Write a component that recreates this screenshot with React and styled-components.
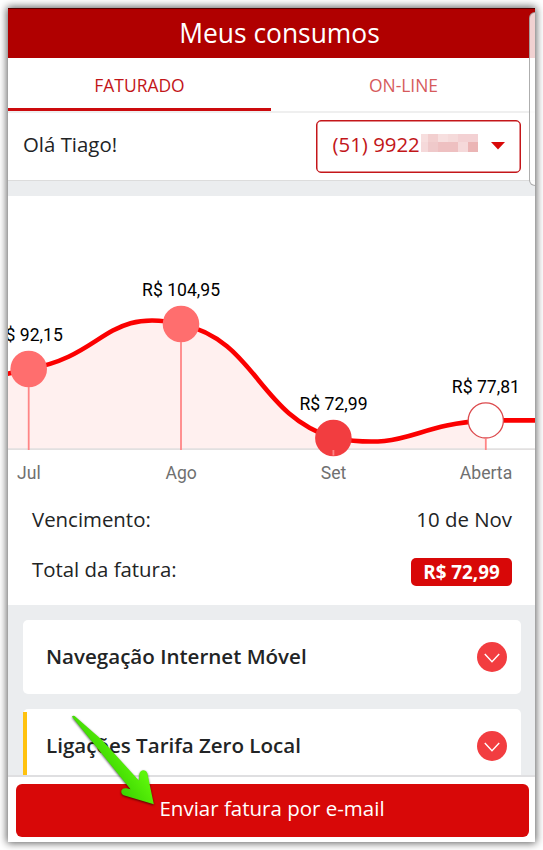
import styled, { createGlobalStyle } from "styled-components";

const months = [
  { id: "jul", label: "Jul", value: "R$ 92,15", x: 20.7, y: 173, color: "#ff6e6e" },
  { id: "ago", label: "Ago", value: "R$ 104,95", x: 173, y: 128, color: "#ff6e6e" },
  { id: "set", label: "Set", value: "R$ 72,99", x: 325.4, y: 242, color: "#f23d40" },
  { id: "aberta", label: "Aberta", value: "R$ 77,81", x: 477.8, y: 224.4, open: true },
];

const services = [
  { id: 1, name: "Navegação Internet Móvel" },
  { id: 2, name: "Ligações Tarifa Zero Local", marked: true },
];

const hiddenDigits = [
  "#f7dede", "#f2cfcf", "#f7dfdf", "#f5dada", "#f3d1d3", "#f3d1d3",
  "#f5d9da", "#efc9ca", "#eec0c1", "#eec0c1", "#f5d9da", "#ebb5b5",
];

const CURVE =
  "C 97 160 96.8 110.8 173 128 C 249 145 249 218 325.4 242 C 401.8 255 401.8 229 477.8 224.4";

const Chart = () => {
  return (
    <ChartSvg viewBox="0 0 527 300">
      <path d={`M -4 178.5 Q 8 176 20.7 173 ${CURVE} V 253 H -4 Z`} fill="#fff0ef" />
      <line x1="0" y1="253.2" x2="527" y2="253.2" stroke="#e2e0e0" strokeWidth="1.8" />
      <path
        d={`M -4 178.5 Q 8 176 20.7 173 ${CURVE} H 530`}
        fill="none"
        stroke="#fb0000"
        strokeWidth="4.6"
      />
      {months.map((el) => {
        return (
          <g key={el.id}>
            <circle
              cx={el.x}
              cy={el.y}
              r={el.open ? 17.6 : 18.3}
              fill={el.open ? "#fff" : el.color}
              stroke={el.open ? "#dc4a4d" : "none"}
              strokeWidth="1.3"
            />
            <line
              x1={el.x}
              x2={el.x}
              y1={el.id === "set" ? 254 : el.y + 18}
              y2={el.id === "set" ? 259.5 : 254}
              stroke="#ff8585"
              strokeWidth="1.8"
            />
            <ValueText x={el.x + 0.1} y={el.y - 27.8}>
              {el.value}
            </ValueText>
            <MonthText x={el.x + 0.2} y="283">
              {el.label}
            </MonthText>
          </g>
        );
      })}
    </ChartSvg>
  );
};

const ServiceCard = ({ name, marked }) => {
  return (
    <Card>
      {marked && <Marker />}
      <ServiceName>{name}</ServiceName>
      <svg width="30" height="30" viewBox="0 0 30 30">
        <circle cx="15" cy="15" r="15" fill="#f23d40" />
        <path d="M7.8 12 15 19.7 22.2 12" fill="none" stroke="#fff" strokeWidth="1.4" />
      </svg>
    </Card>
  );
};

const App = () => {
  return (
    <Page>
      <GlobalStyle />
      <Phone>
        <Header>Meus consumos</Header>
        <Tabs>
          <Tab $active>FATURADO</Tab>
          <Tab>ON-LINE</Tab>
        </Tabs>
        <Greeting>
          <span>Olá Tiago!</span>
          <NumberSelect>
            <PhoneNumber>(51) 9922</PhoneNumber>
            <HiddenDigits>
              {hiddenDigits.map((color, index) => (
                <Pixel key={index} $color={color} />
              ))}
            </HiddenDigits>
            <Caret viewBox="0 0 14 8">
              <path d="M0 0H14L7 7.5Z" fill="#d80808" />
            </Caret>
          </NumberSelect>
        </Greeting>
        <Chart />
        <Summary>
          <SummaryRow>
            <span>Vencimento:</span>
            <span>10 de Nov</span>
          </SummaryRow>
          <SummaryRow>
            <span>Total da fatura:</span>
            <Total>R$ 72,99</Total>
          </SummaryRow>
        </Summary>
        <Services>
          {services.map((el) => (
            <ServiceCard key={el.id} name={el.name} marked={el.marked} />
          ))}
        </Services>
        <Footer>
          <SendButton>Enviar fatura por e-mail</SendButton>
        </Footer>
        <EdgePanel />
        <Arrow viewBox="0 0 92 98">
          <defs>
            <linearGradient id="green" x1="0.35" y1="0.65" x2="0.65" y2="0.4">
              <stop offset="0" stopColor="#37cf00" />
              <stop offset="1" stopColor="#5cf50a" />
            </linearGradient>
          </defs>
          <path
            d="M4 4.8 Q4.6 3 6.6 4 L34 28 L70.8 68.5 L71.4 62 Q72.6 57.6 76.5 58.4 Q79.6 59.2 79.8 63.5 L85.8 92.2 L56.5 83.6 Q52.6 82 53.4 78.6 Q54.6 75.6 58.5 76.3 L62.5 77.2 Z"
            fill="url(#green)"
          />
        </Arrow>
      </Phone>
    </Page>
  );
};

export default App;

const GlobalStyle = createGlobalStyle`
  * {
    box-sizing: border-box;
  }

  body {
    margin: 0;
    background-color: #fff;
    overflow: hidden;
  }
`;

const Page = styled.div`
  height: 850px;
  padding: 8px;
  font-family: "Open Sans", sans-serif;
  font-size: 20.4px;
  color: #222425;
`;

const Phone = styled.div`
  position: relative;
  display: flex;
  flex-direction: column;
  width: 527px;
  height: 834px;
  background-color: #fff;
  box-shadow: 0 0 8px 1px rgba(0, 0, 0, 0.65);
`;

const Header = styled.div`
  height: 50px;
  flex-shrink: 0;
  border-top: 1px solid #500;
  background-color: #b00000;
  color: #fff;
  font-size: 26.4px;
  line-height: 48px;
  text-align: center;
  padding-left: 16px;
`;

const Tabs = styled.div`
  display: flex;
  height: 55px;
  flex-shrink: 0;
  border-bottom: 2px solid #efefef;
`;

const Tab = styled.div`
  flex: 1;
  height: 53px;
  border-bottom: 3px solid ${({ $active }) => ($active ? "#cc0a0d" : "transparent")};
  color: ${({ $active }) => ($active ? "#c21619" : "#d65a5c")};
  font-size: 17.45px;
  line-height: 55px;
  text-align: center;
  padding-left: ${({ $active }) => ($active ? 0 : "1px")};
`;

const Greeting = styled.div`
  display: flex;
  justify-content: space-between;
  height: 83px;
  flex-shrink: 0;
  padding: 7px 14px 0 15px;
  border-bottom: 15px solid #ebedef;
  line-height: 49px;
  box-shadow: inset 0 -1px #dcdcdc;
`;

const NumberSelect = styled.div`
  display: flex;
  align-items: center;
  width: 205px;
  height: 53px;
  padding-left: 15.5px;
  border: 1.5px solid #c4161a;
  border-radius: 5px;
  color: #c21619;
  box-shadow: inset 0 0 0 0.5px #c4161a;
`;

const PhoneNumber = styled.span`
  padding-bottom: 5px;
  line-height: 46px;
`;

const HiddenDigits = styled.div`
  display: grid;
  grid-template-columns: 7px 10px 10px 10px 10px 10px;
  grid-template-rows: 8px 10px;
  margin: -7px 13px 0 1px;
`;

const Pixel = styled.div`
  background-color: ${({ $color }) => $color};
`;

const Caret = styled.svg`
  width: 14px;
  height: 8px;
  margin-top: -1px;
`;

const ChartSvg = styled.svg`
  width: 527px;
  height: 300px;
  flex-shrink: 0;
`;

const ChartText = styled.text`
  font-family: Roboto, sans-serif;
  font-size: 17.6px;
  text-anchor: middle;
`;

const ValueText = styled(ChartText)`
  fill: #000;
`;

const MonthText = styled(ChartText)`
  fill: #707070;
`;

const Summary = styled.div`
  height: 109px;
  flex-shrink: 0;
  padding: 0 23px 0 24px;
`;

const SummaryRow = styled.div`
  display: flex;
  align-items: center;
  justify-content: space-between;
  height: 50px;
  padding-bottom: 5px;
`;

const Total = styled.span`
  width: 101px;
  height: 28px;
  margin-top: 6px;
  border-radius: 5px;
  background-color: #d80808;
  color: #fff;
  font-size: 18.8px;
  font-weight: 700;
  line-height: 28px;
  text-align: center;
`;

const Services = styled.div`
  display: flex;
  flex: 1;
  flex-direction: column;
  gap: 15px;
  min-height: 0;
  padding: 15px 14px 0 15px;
  overflow: hidden;
  background-color: #ebedef;
`;

const Card = styled.div`
  position: relative;
  display: flex;
  align-items: center;
  justify-content: space-between;
  height: 74px;
  flex-shrink: 0;
  padding: 0 14.5px 0 23px;
  border-radius: 5px;
  background-color: #fff;
`;

const Marker = styled.div`
  position: absolute;
  top: 3px;
  bottom: 0;
  left: 0;
  width: 4px;
  background-color: #ffc20e;
`;

const ServiceName = styled.span`
  padding-bottom: 2px;
  font-size: 20.55px;
  font-weight: 600;
`;

const Footer = styled.div`
  height: 67px;
  flex-shrink: 0;
  padding: 7px 6.5px 0 7.5px;
  border-top: 2px solid #dfdfe1;
  background-color: #fff;
`;

const SendButton = styled.button`
  display: block;
  width: 100%;
  height: 52.5px;
  padding: 0 0 4px;
  border: none;
  border-radius: 6px;
  background-color: #d80808;
  color: #fff;
  font-family: inherit;
  font-size: 20.5px;
  text-align: center;
`;

const EdgePanel = styled.div`
  position: absolute;
  top: 4px;
  right: 0;
  width: 6px;
  height: 174px;
  border: 1px solid rgba(120, 120, 120, 0.6);
  border-right: none;
  border-radius: 7px 0 0 7px;
  background-color: rgba(255, 255, 255, 0.82);
`;

const Arrow = styled.svg`
  position: absolute;
  top: 704px;
  left: 60px;
  width: 92px;
  height: 98px;
  filter: drop-shadow(0.5px 1px 1px rgba(0, 0, 0, 0.65));
`;
